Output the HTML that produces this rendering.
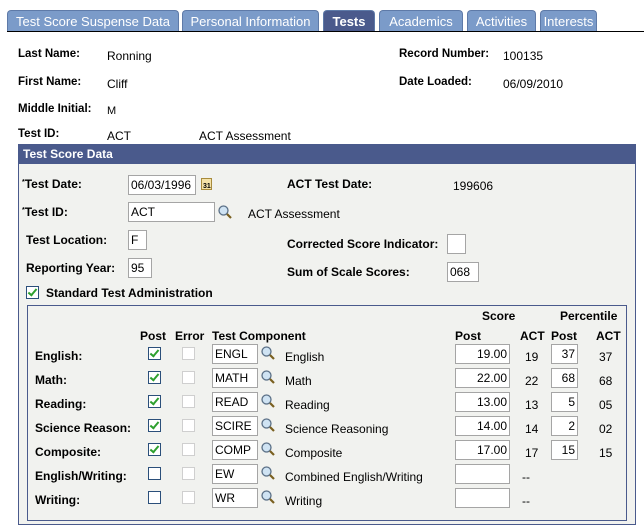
<!DOCTYPE html>
<html><head><meta charset="utf-8"><style>
body{margin:0;width:644px;height:532px;background:#fff;font-family:"Liberation Sans",Arial,sans-serif;font-size:12px;color:#000;position:relative;overflow:hidden}
.a{position:absolute;white-space:nowrap}
.b{font-weight:bold;font-size:12px}
.s{font-size:11.5px}
.tab{position:absolute;top:10px;height:21px;background:#7b9bc9;color:#fff;font-size:13px;line-height:21px;text-align:center;border-radius:4px 4px 0 0;border:1px solid #5e7aa8;border-bottom:none;box-sizing:border-box}
.inp{position:absolute;background:#fff;border:1px solid #a5a5a5;box-sizing:border-box;height:20px;font-size:12px;line-height:18px;padding:0 2px}
.r{text-align:right}
.cb{position:absolute;width:13px;height:13px;border:1px solid #2b4f7a;background:#fff;box-sizing:border-box}
.cbd{border-color:#cfcfcf}
.ck::after{content:"";position:absolute;left:3px;top:0px;width:3px;height:7px;border:solid #2ea02e;border-width:0 2px 2px 0;transform:rotate(40deg)}
sup{font-size:7px;vertical-align:4px}
</style></head><body>
<div class="tab" style="left:7px;width:172px">Test Score Suspense Data</div>
<div class="tab" style="left:182px;width:137px">Personal Information</div>
<div class="tab" style="left:323px;width:52px;background:#4a5a8c;font-weight:bold">Tests</div>
<div class="tab" style="left:379px;width:84px">Academics</div>
<div class="tab" style="left:467px;width:69px">Activities</div>
<div class="tab" style="left:540px;width:57px">Interests</div>
<div class="a" style="left:7px;top:31px;width:637px;height:1px;background:#000"></div>

<div class="a b s" style="left:18px;top:48px">Last Name:</div><div class="a" style="left:107px;top:49px">Ronning</div>
<div class="a b s" style="left:399px;top:48px">Record Number:</div><div class="a" style="left:503px;top:49px">100135</div>
<div class="a b s" style="left:18px;top:76px">First Name:</div><div class="a" style="left:107px;top:77px">Cliff</div>
<div class="a b s" style="left:399px;top:76px">Date Loaded:</div><div class="a" style="left:503px;top:77px">06/09/2010</div>
<div class="a b s" style="left:18px;top:103px">Middle Initial:</div><div class="a" style="left:107px;top:105px;font-size:11px">M</div>
<div class="a b s" style="left:18px;top:128px">Test ID:</div><div class="a" style="left:107px;top:129px">ACT</div><div class="a" style="left:199px;top:129px">ACT Assessment</div>

<div class="a" style="left:18px;top:144px;width:618px;height:381px;border:1px solid #4a5a8c;box-sizing:border-box;background:#f1f2ef"></div>
<div class="a b" style="left:18px;top:144px;width:618px;height:20px;background:#4a5a8c;color:#fff;line-height:20px;padding-left:5px;box-sizing:border-box">Test Score Data</div>

<div class="a b" style="left:22px;top:177px"><sup>*</sup>Test Date:</div>
<div class="inp" style="left:128px;top:175px;width:68px">06/03/1996</div>
<svg class="a" style="left:201px;top:177px" width="11" height="13"><rect x="0.5" y="1.5" width="10" height="11" fill="#f4e2a8" stroke="#a88b3c"/><text x="2" y="11" font-size="7" font-family="Liberation Sans" font-weight="bold">31</text></svg>
<div class="a b" style="left:287px;top:177px">ACT Test Date:</div><div class="a" style="left:453px;top:179px">199606</div>

<div class="a b" style="left:22px;top:205px"><sup>*</sup>Test ID:</div>
<div class="inp" style="left:128px;top:202px;width:87px">ACT</div>
<svg class="a" style="left:218px;top:205px" width="14" height="14"><circle cx="5.5" cy="5.5" r="4.5" fill="#cfe3f3" stroke="#5a6f86" stroke-width="1.3"/><line x1="9" y1="9" x2="13" y2="13" stroke="#7a6020" stroke-width="2.2"/></svg>
<div class="a" style="left:248px;top:207px">ACT Assessment</div>

<div class="a b" style="left:26px;top:233px">Test Location:</div>
<div class="inp" style="left:128px;top:230px;width:19px">F</div>
<div class="a b" style="left:287px;top:237px">Corrected Score Indicator:</div>
<div class="inp" style="left:447px;top:234px;width:19px"></div>
<div class="a b" style="left:26px;top:261px">Reporting Year:</div>
<div class="inp" style="left:128px;top:258px;width:24px">95</div>
<div class="a b" style="left:287px;top:265px">Sum of Scale Scores:</div>
<div class="inp" style="left:447px;top:262px;width:32px">068</div>
<div class="cb ck" style="left:26px;top:286px"></div>
<div class="a b" style="left:46px;top:286px">Standard Test Administration</div>

<div class="a" style="left:27px;top:305px;width:600px;height:216px;border:1px solid #4a5a8c;box-sizing:border-box;background:#f1f2ef"></div>
<div class="a b" style="left:482px;top:309px">Score</div>
<div class="a b" style="left:560px;top:309px">Percentile</div>
<div class="a b" style="left:140px;top:329px">Post</div>
<div class="a b" style="left:175px;top:329px">Error</div>
<div class="a b" style="left:212px;top:329px">Test Component</div>
<div class="a b" style="left:455px;top:329px">Post</div>
<div class="a b" style="left:520px;top:329px">ACT</div>
<div class="a b" style="left:551px;top:329px">Post</div>
<div class="a b" style="left:596px;top:329px">ACT</div>

<div id="rows"></div>
<script>
var rows=[["English:",1,"ENGL","English","19.00","19","37","37"],["Math:",1,"MATH","Math","22.00","22","68","68"],["Reading:",1,"READ","Reading","13.00","13","5","05"],["Science Reason:",1,"SCIRE","Science Reasoning","14.00","14","2","02"],["Composite:",1,"COMP","Composite","17.00","17","15","15"],["English/Writing:",0,"EW","Combined English/Writing","","--",null,""],["Writing:",0,"WR","Writing","","--",null,""]];
var h="";
rows.forEach(function(r,i){var y=345+i*24;
h+='<div class="a b" style="left:35px;top:'+(y+4)+'px">'+r[0]+'</div>';
h+='<div class="cb'+(r[1]?' ck':'')+'" style="left:148px;top:'+(y+2)+'px"></div>';
h+='<div class="cb cbd" style="left:182px;top:'+(y+2)+'px"></div>';
h+='<div class="inp" style="left:212px;top:'+(y-1)+'px;width:46px">'+r[2]+'</div>';
h+='<svg class="a" style="left:261px;top:'+(y+1)+'px" width="14" height="14"><circle cx="5.5" cy="5.5" r="4.5" fill="#cfe3f3" stroke="#5a6f86" stroke-width="1.3"/><line x1="9" y1="9" x2="13" y2="13" stroke="#7a6020" stroke-width="2.2"/></svg>';
h+='<div class="a" style="left:285px;top:'+(y+5)+'px">'+r[3]+'</div>';
h+='<div class="inp r" style="left:455px;top:'+(y-1)+'px;width:55px">'+r[4]+'</div>';
h+='<div class="a" style="left:'+(r[5]=="--"?522:525)+'px;top:'+(y+5)+'px">'+r[5]+'</div>';
if(r[6]!==null){h+='<div class="inp r" style="left:551px;top:'+(y-1)+'px;width:27px">'+r[6]+'</div>';
h+='<div class="a" style="left:599px;top:'+(y+5)+'px">'+r[7]+'</div>';}
});
document.getElementById("rows").innerHTML=h;
</script>
</body></html>
